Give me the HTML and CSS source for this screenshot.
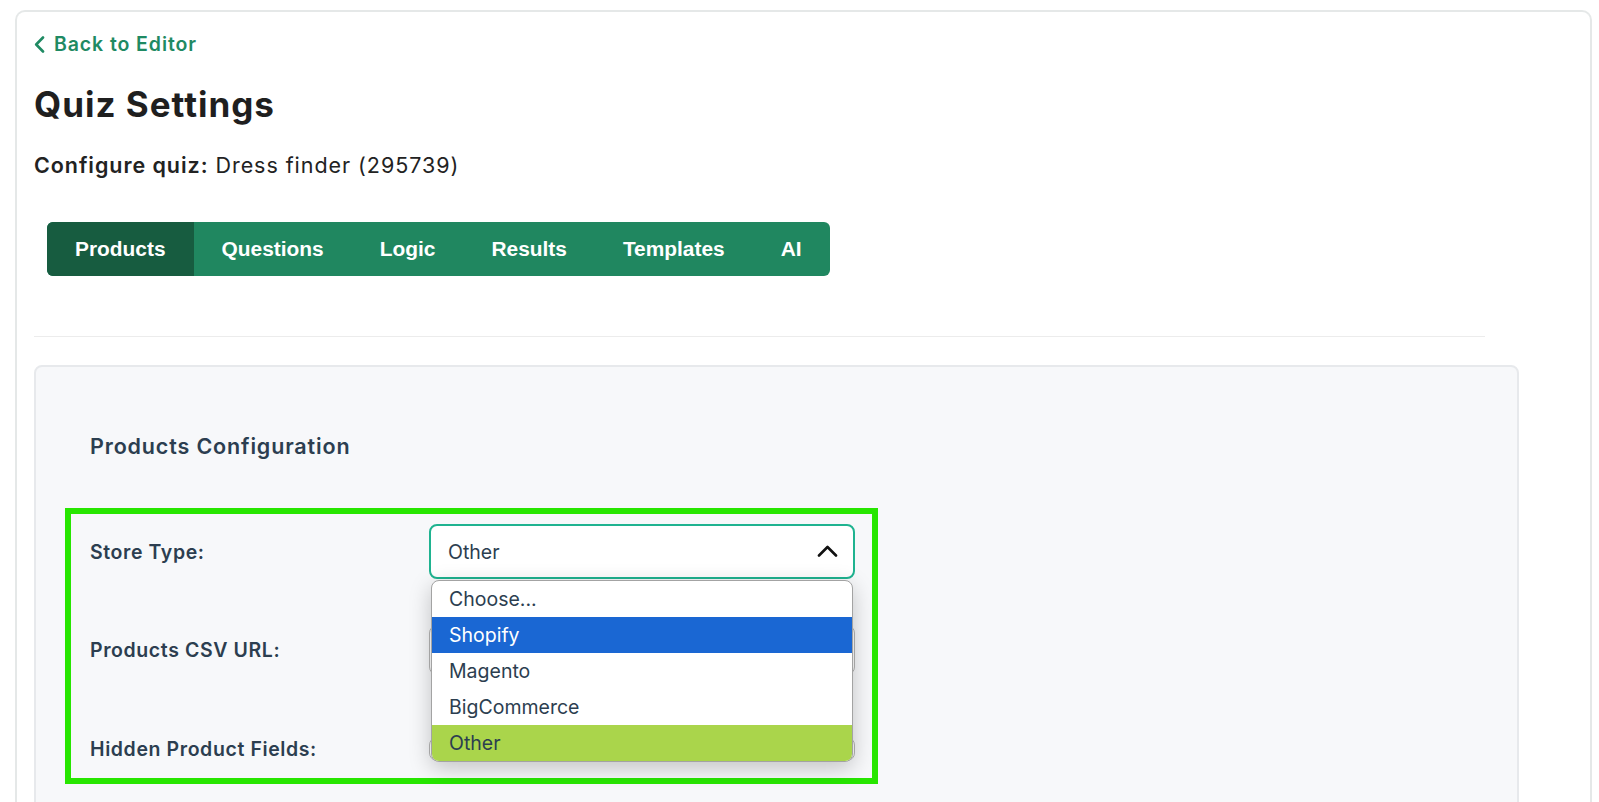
FILE: index.html
```html
<!DOCTYPE html>
<html lang="en">
<head>
<meta charset="UTF-8">
<meta name="viewport" content="width=device-width, initial-scale=1.0">
<title>Quiz Settings</title>
<link rel="stylesheet" href="styles.css">
</head>
<body>
<div class="page">
    <a class="back" href="#">
        <svg width="11" height="17" viewBox="0 0 11 17"><path d="M9 1.5 L2.2 8.5 L9 15.5" fill="none" stroke="currentColor" stroke-width="2.6" stroke-linecap="round" stroke-linejoin="round"/></svg>
        Back to Editor
    </a>
    <h1>Quiz Settings</h1>
    <p class="quiz-name"><b>Configure quiz:</b> Dress finder (295739)</p>

    <div class="tabs">
        <div class="tab active">Products</div>
        <div class="tab">Questions</div>
        <div class="tab">Logic</div>
        <div class="tab">Results</div>
        <div class="tab">Templates</div>
        <div class="tab">AI</div>
    </div>

    <hr class="sep">

    <div class="panel">
        <h2>Products Configuration</h2>

        <div class="highlight">
            <div class="row row-store">
                <label>Store Type:</label>
                <div class="select-wrap">
                    <div class="select">
                        <span>Other</span>
                        <svg width="21" height="12" viewBox="0 0 21 12"><path d="M2 10.5 L10.5 2 L19 10.5" fill="none" stroke="#111" stroke-width="2.6" stroke-linecap="round" stroke-linejoin="round"/></svg>
                    </div>
                    <ul class="options">
                        <li>Choose...</li>
                        <li class="hover">Shopify</li>
                        <li>Magento</li>
                        <li>BigCommerce</li>
                        <li class="picked">Other</li>
                    </ul>
                </div>
            </div>
            <div class="row row-csv">
                <label>Products CSV URL:</label>
                <input class="field" type="text">
            </div>
            <div class="row row-hidden">
                <label>Hidden Product Fields:</label>
                <input class="field small" type="text">
            </div>
        </div>
    </div>
</div>
</body>
</html>
```

FILE: styles.css
```css
body {
    margin: 0;
    background-color: #ffffff;
    font-family: Inter, Lato, sans-serif;
    color: #222222;
}

.page {
    margin: 10px 7px 0 15px;
    border: 2px solid #e5e8e8;
    border-bottom: none;
    border-radius: 10px 10px 0 0;
    padding: 20px 71px 0 17px;
    height: 800px;
}

.back {
    display: flex;
    align-items: center;
    gap: 9px;
    color: #1f8a63;
    font-size: 19.5px;
    font-weight: 600;
    line-height: 24px;
    letter-spacing: 0.9px;
    text-decoration: none;
}

h1 {
    margin: 26px 0 0 0;
    font-size: 35px;
    line-height: 44px;
    font-weight: 700;
    letter-spacing: 1px;
    color: #1f1f1f;
}

.quiz-name {
    margin: 25px 0 0 0;
    font-size: 21.5px;
    line-height: 28px;
    letter-spacing: 0.95px;
    color: #222222;
}

.quiz-name b {
    font-weight: 600;
}

.tabs {
    display: inline-flex;
    margin: 43px 0 0 13px;
    background-color: #208760;
    border-radius: 6px;
    overflow: hidden;
}

.tab {
    padding: 0 28px;
    height: 54px;
    line-height: 54px;
    color: #ffffff;
    font-family: "Liberation Sans", Arial, sans-serif;
    font-weight: 700;
    font-size: 20.9px;
}

.tab.active {
    background-color: #175c40;
}

.sep {
    margin: 60px 34px 0 0;
    border: none;
    border-top: 1px solid #ececec;
}

.panel {
    margin-top: 28px;
    background-color: #f7f8fa;
    border: 2px solid #e7e9ec;
    border-radius: 8px;
    padding: 65px 30px 30px 29px;
    height: 600px;
}

h2 {
    margin: 0 0 0 25px;
    font-size: 21.5px;
    line-height: 28px;
    font-weight: 600;
    letter-spacing: 0.85px;
    color: #2c3e50;
}

.highlight {
    margin-top: 48px;
    border: 6px solid #27e600;
    padding: 10px 17px 4px 19px;
    box-sizing: border-box;
    width: 813px;
}

.row {
    display: flex;
    align-items: center;
}

.row label {
    width: 339px;
    flex-shrink: 0;
    font-size: 19.5px;
    font-weight: 600;
    line-height: 24px;
    letter-spacing: 0.6px;
    color: #2c3e50;
}

.row-csv {
    margin-top: 46px;
}

.row-hidden {
    margin-top: 49px;
    height: 50px;
}

.select-wrap {
    position: relative;
    flex: 1;
}

.select {
    height: 55px;
    box-sizing: border-box;
    border: 2px solid #1fb390;
    border-radius: 8px;
    background-color: #ffffff;
    display: flex;
    align-items: center;
    justify-content: space-between;
    padding: 0 15px 0 17px;
    font-size: 19.5px;
    color: #2c3e50;
}

.select svg {
    margin-top: -2px;
}

.options {
    position: absolute;
    top: 56px;
    left: 2px;
    right: 2px;
    margin: 0;
    padding: 0;
    list-style: none;
    background-color: #ffffff;
    border: 1px solid #a3a3a3;
    border-radius: 8px;
    overflow: hidden;
    box-shadow: 0 6px 22px rgba(0, 0, 0, 0.22);
    z-index: 2;
}

.options li {
    height: 36px;
    line-height: 37px;
    padding-left: 17px;
    font-size: 19.5px;
    color: #2c3e50;
}

.options li.hover {
    background-color: #1a67d3;
    color: #ffffff;
}

.options li.picked {
    background-color: #aad54b;
}

.field {
    flex: 1;
    height: 50px;
    box-sizing: border-box;
    border: 1px solid #b5b5b5;
    border-radius: 8px;
    background-color: #ffffff;
}

.field.small {
    height: 24px;
}
```
